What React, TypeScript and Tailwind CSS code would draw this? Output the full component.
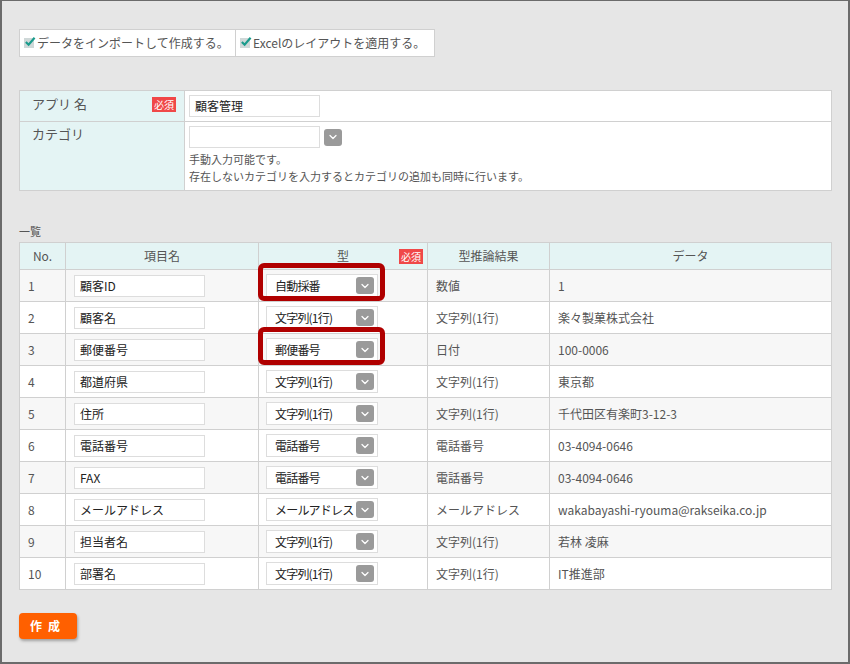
import { ChevronDown } from "lucide-react";

const font = { fontFamily: '"Noto Sans CJK JP", "Noto Sans", sans-serif' };

type Row = { no: number; name: string; type: string; guess: string; data: string; mark?: boolean };

const rows: Row[] = [
  { no: 1, name: "顧客ID", type: "自動採番", guess: "数値", data: "1", mark: true },
  { no: 2, name: "顧客名", type: "文字列(1行)", guess: "文字列(1行)", data: "楽々製菓株式会社" },
  { no: 3, name: "郵便番号", type: "郵便番号", guess: "日付", data: "100-0006", mark: true },
  { no: 4, name: "都道府県", type: "文字列(1行)", guess: "文字列(1行)", data: "東京都" },
  { no: 5, name: "住所", type: "文字列(1行)", guess: "文字列(1行)", data: "千代田区有楽町3-12-3" },
  { no: 6, name: "電話番号", type: "電話番号", guess: "電話番号", data: "03-4094-0646" },
  { no: 7, name: "FAX", type: "電話番号", guess: "電話番号", data: "03-4094-0646" },
  { no: 8, name: "メールアドレス", type: "メールアドレス", guess: "メールアドレス", data: "wakabayashi-ryouma@rakseika.co.jp" },
  { no: 9, name: "担当者名", type: "文字列(1行)", guess: "文字列(1行)", data: "若林 凌麻" },
  { no: 10, name: "部署名", type: "文字列(1行)", guess: "文字列(1行)", data: "IT推進部" },
];

function DropBtn() {
  return (
    <span className="flex h-[17px] w-[18px] shrink-0 items-center justify-center rounded-[3px] bg-[#9a9a9a]">
      <ChevronDown className="h-3 w-3 text-white" strokeWidth={2.5} />
    </span>
  );
}

function Required() {
  return (
    <span className="bg-[#f04848] px-[2px] text-[10px] leading-[13px] text-white">必須</span>
  );
}

function Check({ label }: { label: string }) {
  return (
    <div className="flex h-[26px] items-center gap-[3px] bg-white px-[4px] text-[12px] text-[#555]">
      <span className="relative h-[10px] w-[10px] bg-[#cfd8d8]">
        <svg viewBox="0 0 12 12" className="absolute -top-[2px] left-0 h-[11px] w-[12px]">
          <path d="M1.5 6.5 L4.5 9.5 L11 2" fill="none" stroke="#1a9b8c" strokeWidth="2.4" />
        </svg>
      </span>
      {label}
    </div>
  );
}

function TypeSelect({ value, mark }: { value: string; mark?: boolean }) {
  return (
    <div className="relative w-[112px]">
      {mark && (
        <div className="pointer-events-none absolute -left-[8px] -right-[7px] -top-[11px] -bottom-[4px] rounded-[6px] border-[5px] border-[#b00000]" />
      )}
      <div className="flex h-[23px] items-center justify-between gap-[1px] border border-[#ddd] bg-white pl-[8px] pr-[3px]">
        <span className="mt-[1px] min-w-0 whitespace-nowrap tracking-[-0.8px]">{value}</span>
        <DropBtn />
      </div>
    </div>
  );
}

export default function App() {
  return (
    <div style={font} className="h-[664px] w-[850px] border-b-2 border-l-2 border-r-2 border-t border-[#6b6b6b] bg-[#e6e6e6] text-[12px] text-[#555]">
      <div className="pl-[17px] pr-[17px] pt-[28px]">
        <div className="flex w-[416px] gap-px border border-[#d0d0d0] bg-[#d0d0d0]">
          <div className="w-[215px]">
            <Check label="データをインポートして作成する。" />
          </div>
          <div className="flex-1">
            <Check label="Excelのレイアウトを適用する。" />
          </div>
        </div>

        <table className="mt-[33px] w-[813px] border-collapse border border-[#d0d0d0]">
          <tbody>
            <tr className="h-[31px]">
              <td className="w-[165px] border border-[#d0d0d0] bg-[#e4f4f4] px-[12px] align-top">
                <div className="flex items-center justify-between pt-[3px]">
                  <span className="text-[13px]">アプリ 名</span>
                  <span className="-mr-[4px]"><Required /></span>
                </div>
              </td>
              <td className="border border-[#d0d0d0] bg-white px-[4px]">
                <div className="flex h-[22px] w-[131px] items-center border border-[#ddd] bg-white px-[5px] text-[#222]">
                  顧客管理
                </div>
              </td>
            </tr>
            <tr className="h-[69px]">
              <td className="border border-[#d0d0d0] bg-[#e4f4f4] px-[12px] pt-[2px] align-top">
                <span className="text-[13px]">カテゴリ</span>
              </td>
              <td className="border border-[#d0d0d0] bg-white px-[4px] pt-[4px] align-top">
                <div className="flex items-center gap-[4px]">
                  <div className="h-[22px] w-[131px] border border-[#ddd] bg-white" />
                  <DropBtn />
                </div>
                <div className="mt-[3px] text-[11px] leading-[17px]">
                  <div>手動入力可能です。</div>
                  <div>存在しないカテゴリを入力するとカテゴリの追加も同時に行います。</div>
                </div>
              </td>
            </tr>
          </tbody>
        </table>

        <div className="mt-[33px] text-[11px] leading-[14px]">一覧</div>

        <table className="mt-[4px] w-[813px] border-collapse border border-[#d0d0d0]">
          <thead>
            <tr className="h-[27px] bg-[#e4f4f4] text-center">
              <th className="w-[46px] border border-[#d0d0d0] font-normal">No.</th>
              <th className="w-[193px] border border-[#d0d0d0] font-normal">項目名</th>
              <th className="relative w-[169px] border border-[#d0d0d0] font-normal">
                型
                <span className="absolute right-[4px] top-[4px]"><Required /></span>
              </th>
              <th className="w-[122px] border border-[#d0d0d0] font-normal">型推論結果</th>
              <th className="border border-[#d0d0d0] font-normal">データ</th>
            </tr>
          </thead>
          <tbody>
            {rows.map((r, i) => (
              <tr key={r.no} className={`h-[32px] ${i % 2 === 0 ? "bg-[#f7f7f7]" : "bg-white"}`}>
                <td className="border border-[#d0d0d0] px-[8px]">{r.no}</td>
                <td className="border border-[#d0d0d0] px-[8px]">
                  <div className="flex h-[22px] w-[131px] items-center border border-[#ddd] bg-white px-[5px] text-[#222]">
                    {r.name}
                  </div>
                </td>
                <td className="border border-[#d0d0d0] px-[7px] text-[#222]">
                  <TypeSelect value={r.type} mark={r.mark} />
                </td>
                <td className="border border-[#d0d0d0] px-[8px]">{r.guess}</td>
                <td className="border border-[#d0d0d0] px-[8px]">{r.data}</td>
              </tr>
            ))}
          </tbody>
        </table>

        <button className="mt-[23px] h-[26px] w-[58px] rounded-[4px] bg-[#ff6000] text-[12px] font-bold tracking-[6px] text-white shadow-[1px_2px_3px_rgba(0,0,0,0.3)]">
          作成
        </button>
      </div>
    </div>
  );
}
